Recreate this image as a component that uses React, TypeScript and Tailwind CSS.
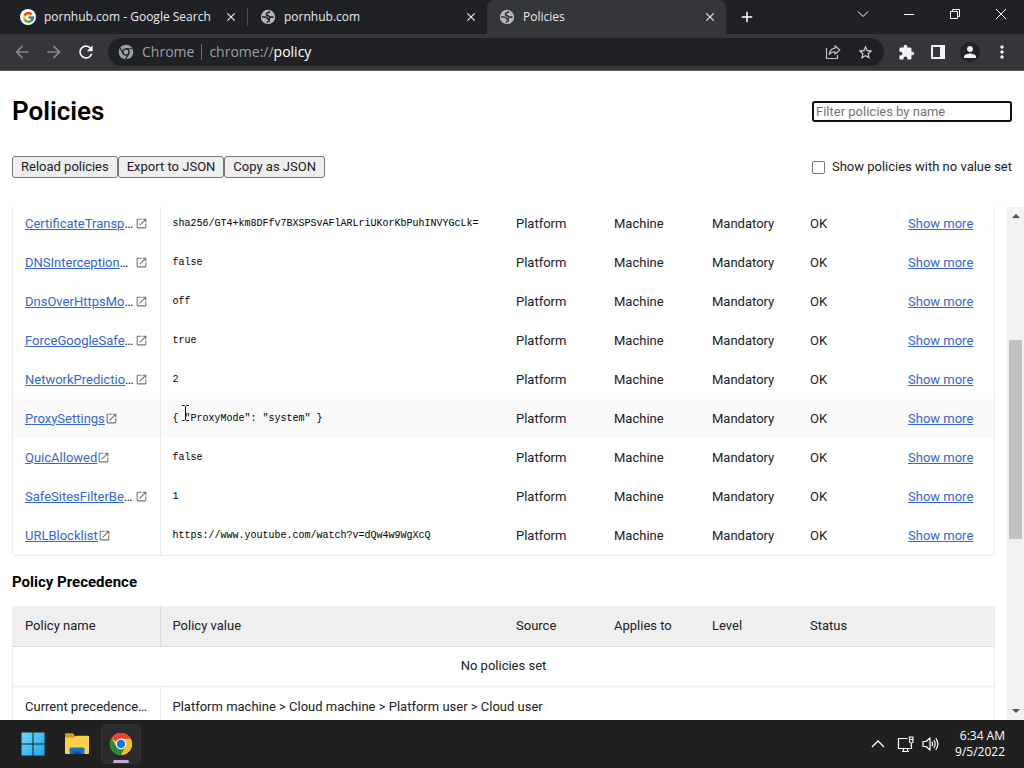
import type { ReactNode } from 'react'
import clsx from 'clsx'
import { FcGoogle } from 'react-icons/fc'
import {
  MdAdd,
  MdArrowBack,
  MdArrowForward,
  MdClose,
  MdExtension,
  MdMoreVert,
  MdOpenInNew,
  MdPerson,
  MdRefresh,
  MdStarBorder,
} from 'react-icons/md'

interface Policy {
  name: string
  value: string
  clipped?: boolean
  hover?: boolean
}

const policies: Policy[] = [
  { name: 'CertificateTransp', value: 'sha256/GT4+km8DFfv7BXSPSvAFlARLriUKorKbPuhINVYGcLk=', clipped: true },
  { name: 'DNSInterception', value: 'false', clipped: true },
  { name: 'DnsOverHttpsMo', value: 'off', clipped: true },
  { name: 'ForceGoogleSafe', value: 'true', clipped: true },
  { name: 'NetworkPredictio', value: '2', clipped: true },
  { name: 'ProxySettings', value: '{ "ProxyMode": "system" }', hover: true },
  { name: 'QuicAllowed', value: 'false' },
  { name: 'SafeSitesFilterBe', value: '1', clipped: true },
  { name: 'URLBlocklist', value: 'https://www.youtube.com/watch?v=dQw4w9WgXcQ' },
]

function Globe({ className }: { className: string }) {
  return (
    <svg viewBox="0 0 16 16" className={clsx('size-4 shrink-0', className)} aria-hidden="true">
      <circle cx="8" cy="8" r="7.2" fill="#b4b7bb" />
      <path
        d="M1.800 8h3.700q1.700.2 1.900 1.800h1.800v1.900q-1.900.2-2 2.200M9.600 2.200q-.2 1.500-1.900 1.500-1.400.2-1.200 1.700.2 1.300 1.700 1.200l1.500 1.500h3.800"
        fill="none"
        stroke="currentColor"
        strokeWidth="1.600"
      />
    </svg>
  )
}

function ChromeMono() {
  return (
    <svg viewBox="0 0 24 24" className="size-4 shrink-0" aria-hidden="true">
      <circle cx="12" cy="12" r="11" fill="#9aa0a6" />
      <circle cx="12" cy="12" r="5.6" fill="#202124" />
      <circle cx="12" cy="12" r="3.7" fill="#9aa0a6" />
      <path d="M12 7.2h10M7.8 14.4l-5-8.7M16.2 14.4l-5 8.7" stroke="#202124" strokeWidth="1.7" />
    </svg>
  )
}

function ChromeLogo() {
  return (
    <svg viewBox="0 0 48 48" className="size-6" aria-hidden="true">
      <circle cx="24" cy="24" r="22" fill="#fbc116" />
      <path d="M24 24L4.95 13A22 22 0 0 1 43.05 13L43.5 14H24z" fill="#ea4335" />
      <path d="M4.95 13A22 22 0 0 0 24 46l9.2-16.5L15.3 29z" fill="#1e8e3e" />
      <path d="M24 13.5h19.3A22 22 0 0 1 24 46l9.3-16.5z" fill="#fbc116" />
      <circle cx="24" cy="24" r="10.8" fill="#fff" />
      <circle cx="24" cy="24" r="8.4" fill="#1a73e8" />
    </svg>
  )
}

function WindowsLogo() {
  return (
    <svg viewBox="0 0 24 24" className="size-6" aria-hidden="true">
      <defs>
        <linearGradient id="win" x1="0" y1="0" x2="1" y2="1">
          <stop offset="0" stopColor="#6fd6fb" />
          <stop offset="1" stopColor="#1fa5ee" />
        </linearGradient>
      </defs>
      <path d="M.5.5h11v11H.5zM12.5.5h11v11h-11zM.5 12.5h11v11H.5zM12.5 12.5h11v11h-11z" fill="url(#win)" />
    </svg>
  )
}

function FolderIcon() {
  return (
    <svg viewBox="0 0 26 24" className="h-6 w-[26px]" aria-hidden="true">
      <path d="M1 2.2q0-1 1-1h7l2 2.8v4H1z" fill="#d9981e" />
      <path d="M1 5.5h9l2-1.7h12q1 0 1 1V21q0 1-1 1H2q-1 0-1-1z" fill="#fcd04a" />
      <path d="M5.5 22v-5q0-1.500 1.500-1.500h12q1.500 0 1.500 1.500v5z" fill="#1673c4" />
      <path d="M9 22v-2.500h8V22z" fill="#0e4f91" />
    </svg>
  )
}

function Tab({ title, icon, active }: { title: string; icon: ReactNode; active?: boolean }) {
  return (
    <div
      className={clsx(
        'flex h-full w-[239px] items-center gap-2 pr-2 pl-3 text-[#e8eaed]',
        active && 'rounded-t-lg bg-[#35363a]',
      )}
    >
      {icon}
      <span className="min-w-0 flex-1 truncate">{title}</span>
      <button aria-label={`Close ${title}`} className="p-px">
        <MdClose size={14} />
      </button>
    </div>
  )
}

function TabStrip() {
  return (
    <div className="flex h-[34px] bg-[#202124] pl-2 text-xs">
      <Tab
        title="pornhub.com - Google Search"
        icon={
          <span className="flex size-4 items-center justify-center rounded-full bg-white">
            <FcGoogle size={13} />
          </span>
        }
      />
      <div className="my-2 w-px bg-[#4a4c50]" />
      <Tab title="pornhub.com" icon={<Globe className="text-[#202124]" />} />
      <Tab title="Policies" active icon={<Globe className="text-[#35363a]" />} />
      <button aria-label="New tab" className="px-3 text-white">
        <MdAdd size={18} />
      </button>
      <div className="ml-auto flex text-white">
        <button aria-label="Search tabs" className="flex w-[46px] items-center justify-center pb-1.5">
          <svg width="12" height="12" fill="none" stroke="currentColor">
            <path d="M1 3.5l5 5 5-5" />
          </svg>
        </button>
        <button aria-label="Minimize" className="flex w-[46px] items-center justify-center pb-1.5">
          <svg width="12" height="12" fill="none" stroke="currentColor">
            <path d="M1 6.5h10" />
          </svg>
        </button>
        <button aria-label="Restore" className="flex w-[46px] items-center justify-center pb-1.5">
          <svg width="12" height="12" fill="none" stroke="currentColor">
            <path d="M1.500 3.500h7v7h-7zM3.500 3.500v-2h7v7h-2" />
          </svg>
        </button>
        <button aria-label="Close" className="flex w-[46px] items-center justify-center pb-1.5">
          <svg width="12" height="12" fill="none" stroke="currentColor">
            <path d="M1 1l10 10M11 1L1 11" />
          </svg>
        </button>
      </div>
    </div>
  )
}

function Toolbar() {
  return (
    <div className="flex h-[37px] items-center border-b border-[#5c5a5a] bg-[#35363a] pr-1.5 pl-3 text-[#f1f3f4]">
      <div className="flex w-24 shrink-0 items-center gap-3">
        <button aria-label="Back" className="text-[#85878b]">
          <MdArrowBack size={20} />
        </button>
        <button aria-label="Forward" className="text-[#85878b]">
          <MdArrowForward size={20} />
        </button>
        <button aria-label="Reload">
          <MdRefresh size={20} />
        </button>
      </div>
      <div className="flex h-7 flex-1 items-center rounded-full bg-[#202124] px-2.5 text-sm">
        <ChromeMono />
        <span className="ml-2 text-[#9aa0a6]">Chrome</span>
        <span className="mx-[7px] h-4 w-px bg-[#6b6e73]" />
        <span className="flex-1 text-[#9aa0a6]">
          chrome://<span className="text-white">policy</span>
        </span>
        <button aria-label="Share" className="mr-4 text-[#bdc1c6]">
          <svg width="16" height="16" fill="none" stroke="currentColor" strokeWidth="1.2">
            <path d="M1.500 4v10.500h11V11" />
            <path
              d="M10 1.800l4.800 4.200L10 10.200V7.800c-2.700 0-4.400.8-5.700 2.700.4-3.500 2.300-5.900 5.700-6.300z"
              strokeLinejoin="round"
            />
          </svg>
        </button>
        <button aria-label="Bookmark this tab" className="text-[#d5d7da]">
          <MdStarBorder size={17} />
        </button>
      </div>
      <div className="ml-1.5 flex items-center">
        <button aria-label="Extensions" className="flex w-8 justify-center">
          <MdExtension size={17} />
        </button>
        <button aria-label="Side panel" className="flex w-8 justify-center">
          <svg width="14" height="14" fill="currentColor">
            <path d="M0 0h14v14H0zM2 2v10h7V2z" fillRule="evenodd" />
          </svg>
        </button>
        <button aria-label="Profile" className="flex w-8 justify-center">
          <span className="flex size-5 items-center justify-center rounded-full bg-[#202124]">
            <MdPerson size={18} />
          </span>
        </button>
        <button aria-label="Menu" className="flex w-8 justify-center">
          <MdMoreVert size={20} />
        </button>
      </div>
    </div>
  )
}

function PageHeader() {
  return (
    <header className="px-3 pb-6">
      <div className="flex h-20 items-center justify-between">
        <h1 className="text-[26px] font-semibold text-black">Policies</h1>
        <input
          type="text"
          aria-label="Filter policies by name"
          placeholder="Filter policies by name"
          className="h-[21px] w-[200px] rounded-[3px] border-2 border-[#101010] px-0.5 placeholder:text-[#757575]"
        />
      </div>
      <div className="flex h-8 items-center justify-between">
        <div className="flex">
          {['Reload policies', 'Export to JSON', 'Copy as JSON'].map(label => (
            <button key={label} className="h-[22px] rounded-[3px] border border-[#767676] bg-[#efefef] px-2">
              {label}
            </button>
          ))}
        </div>
        <label className="flex items-center gap-[7px]">
          <input
            type="checkbox"
            className="size-[13px] appearance-none rounded-[2px] border border-[#767676] bg-white"
          />
          Show policies with no value set
        </label>
      </div>
    </header>
  )
}

function Columns() {
  return (
    <colgroup>
      <col className="w-[147px]" />
      <col />
      <col className="w-[98px]" />
      <col className="w-[98px]" />
      <col className="w-[98px]" />
      <col className="w-[98px]" />
      <col className="w-[98px]" />
    </colgroup>
  )
}

function IBeam() {
  return (
    <svg width="9" height="16" fill="none" stroke="#111" className="absolute -top-1.5 left-2" aria-hidden="true">
      <path d="M1 .5h2.500l1 1 1-1H8M4.500 1.500v13M1 15.500h2.500l1-1 1 1H8" />
    </svg>
  )
}

function PolicyTable() {
  return (
    <div className="rounded-b-sm border border-t-0 border-[#ebebeb]">
      <table className="w-full table-fixed">
        <Columns />
        <tbody>
          {policies.map(p => (
            <tr key={p.name} className={clsx('h-[39px]', p.hover && 'bg-[#fafafa]')}>
              <td className="border-r border-[#ebebeb] px-3">
                <div className="flex items-center">
                  <span className={clsx('whitespace-nowrap', p.clipped && 'min-w-[110px]')}>
                    <a href="#" className="text-[#3367d6] underline">{p.name}</a>
                    {p.clipped && '…'}
                  </span>
                  <MdOpenInNew size={13} className="shrink-0 text-[#757575]" />
                </div>
              </td>
              <td className="px-3 font-['Liberation_Mono',monospace] text-[10px] whitespace-nowrap text-black">
                <div className="relative">
                  {p.value}
                  {p.hover && <IBeam />}
                </div>
              </td>
              <td className="px-3">Platform</td>
              <td className="px-3">Machine</td>
              <td className="px-3">Mandatory</td>
              <td className="px-3">OK</td>
              <td className="px-3">
                <a href="#" className="text-[#3367d6] underline">Show more</a>
              </td>
            </tr>
          ))}
        </tbody>
      </table>
    </div>
  )
}

function PrecedenceTable() {
  return (
    <div className="border-x border-[#ebebeb]">
      <table className="w-full table-fixed">
        <Columns />
        <thead>
          <tr className="h-10 border-b border-[#dcdcdc] bg-[#efefef] text-left">
            <th className="border-r border-[#dcdcdc] px-3 font-normal">Policy name</th>
            {['Policy value', 'Source', 'Applies to', 'Level', 'Status'].map(h => (
              <th key={h} className="px-3 font-normal">{h}</th>
            ))}
            <th />
          </tr>
        </thead>
        <tbody>
          <tr className="h-10 border-b border-[#ebebeb]">
            <td colSpan={7} className="text-center">No policies set</td>
          </tr>
          <tr className="h-10">
            <td className="border-r border-[#ebebeb] pr-2 pl-3 whitespace-nowrap">Current precedence…</td>
            <td colSpan={6} className="px-3">
              Platform machine &gt; Cloud machine &gt; Platform user &gt; Cloud user
            </td>
          </tr>
        </tbody>
      </table>
    </div>
  )
}

function Scrollbar() {
  return (
    <div className="flex w-[17px] shrink-0 flex-col items-center bg-[#f1f1f1] py-1.5">
      <svg width="8" height="5" fill="#505050" className="shrink-0">
        <path d="M0 5l4-4 4 4z" />
      </svg>
      <div className="flex-[122]" />
      <div className="w-[13px] flex-[199] bg-[#c1c1c1]" />
      <div className="flex-[170]" />
      <svg width="8" height="5" fill="#505050" className="shrink-0">
        <path d="M0 0l4 4 4-4z" />
      </svg>
    </div>
  )
}

function Taskbar() {
  return (
    <footer className="flex h-12 shrink-0 items-center bg-[#202020] px-[19px] pl-[13px] font-['Open_Sans',sans-serif] text-xs text-white">
      <button aria-label="Start" className="flex size-10 items-center justify-center">
        <WindowsLogo />
      </button>
      <button aria-label="File Explorer" className="ml-1 flex size-10 items-center justify-center">
        <FolderIcon />
      </button>
      <button
        aria-label="Google Chrome"
        className="relative ml-1 flex size-10 items-center justify-center rounded-sm border border-[#303030] bg-[#2b2b2b]"
      >
        <ChromeLogo />
        <span className="absolute inset-x-0 bottom-0 mx-auto h-[3px] w-4 rounded-full bg-[#cba6dd]" />
      </button>
      <div className="ml-auto flex items-center">
        <button aria-label="Hidden icons" className="mr-3">
          <svg width="14" height="10" fill="none" stroke="currentColor" strokeWidth="1.3">
            <path d="M1 8l6-6 6 6" />
          </svg>
        </button>
        <button aria-label="Network" className="mr-2">
          <svg width="17" height="17" fill="none" stroke="currentColor" strokeWidth="1.2">
            <path d="M10.500 2.500h-9v10h13V9M5 15.500h7M6.500 12.500v3M10.500 12.500v3" />
            <path d="M12.500 1h3.500v4.500q0 1.500-1.700 1.500t-1.800-1.500zM12.500 3.500H16M14.300 7v3" />
          </svg>
        </button>
        <button aria-label="Volume" className="mr-4">
          <svg width="17" height="16" fill="none" stroke="currentColor" strokeWidth="1.2">
            <path d="M1 5.500h3L8 2v12l-4-3.500H1z" strokeLinejoin="round" />
            <path d="M9.800 5.800q1.600 2.200 0 4.400M11.800 4q2.800 4 0 8M13.800 2.200q4 5.800 0 11.600" />
          </svg>
        </button>
        <div className="text-right leading-4">
          <div>6:34 AM</div>
          <div>9/5/2022</div>
        </div>
      </div>
    </footer>
  )
}

export default function App() {
  return (
    <div className="flex h-screen flex-col bg-white font-[Roboto,sans-serif] text-[13px] text-[#202124]">
      <div className="shrink-0 font-['Open_Sans',sans-serif]">
        <TabStrip />
        <Toolbar />
      </div>
      <PageHeader />
      <div className="flex min-h-0 flex-1">
        <main className="min-w-0 flex-1 overflow-hidden px-3">
          <div className="-mt-[3px]">
            <PolicyTable />
            <h3 className="flex h-[50px] items-center pt-0.5 text-[15px] font-bold text-black">Policy Precedence</h3>
            <PrecedenceTable />
          </div>
        </main>
        <Scrollbar />
      </div>
      <Taskbar />
    </div>
  )
}
